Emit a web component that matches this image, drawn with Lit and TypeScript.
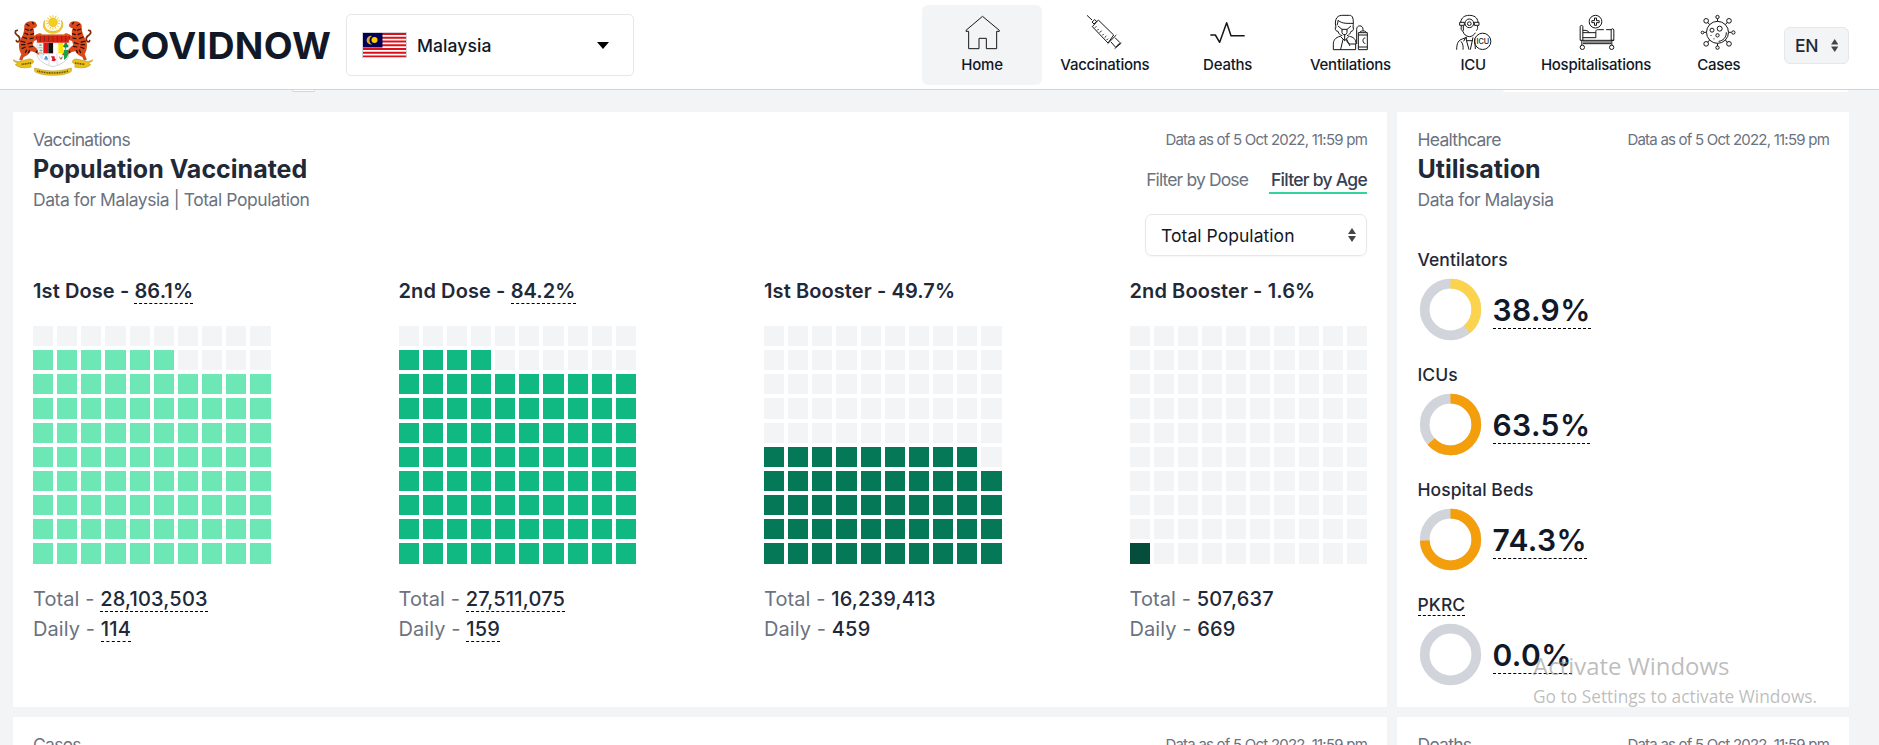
import { LitElement, html, svg, css } from "lit";
import { customElement, property } from "lit/decorators.js";
import { classMap } from "lit/directives/class-map.js";

const tiger = svg`
  <path d="M37 66c-8 0-8 9-2 13 8 5 12 10 8 18-2 5-8 4-9 0" fill="none" stroke="#7a2a0c" stroke-width="5" stroke-linecap="round"/>
  <path transform="translate(4 0)" d="M54 50c4-9 14-13 23-11 8 0 14 5 15 12 0 6-5 8-11 9 3 7 3 14 2 22 8-1 13-8 19-7 5 1 6 6 3 9-6 6-13 13-22 14l-4 12c7 4 13 11 17 18 8 1 14 5 17 11-7 4-15 2-20-3-6-4-14-7-20-7-4 9-12 14-21 17l-4 10c-6 1-10-1-9-4l6-15c-7-10-10-30-3-43 8-13 12-24 12-44z" fill="#d9481a"/>
  <path transform="translate(4 0)" d="M60 47l9 6M78 41l4 7M56 62l12 4M80 62l-9 4M54 74l12 5M83 76l-11 3M48 86l14 5M82 89l-12 2M42 98l15 4M44 109l13 0M77 103l-14 4M80 114l-13 2M46 121l12-5M57 134l4-10M93 82l-3 8M70 125l-4 9M92 127l-3 7" fill="none" stroke="#2a0f08" stroke-width="3.6"/>`;

const crest = html`<svg class="crest" viewBox="24 20 240 182" aria-label="Crest">
  <g stroke="#f5c400" stroke-width="2.5">
    ${Array.from({ length: 14 }, (_, i) => svg`<path d="M144 27V20" transform="rotate(${i * 25.7} 144 42)"/>`)}
  </g>
  <circle cx="144" cy="42" r="13" fill="#f6cf1d" stroke="#d9a900" stroke-width="1.5"/>
  <path d="M119 36C107 59 124 75 144 75s37-16 26-39c3 22-8 33-26 33s-29-11-25-33z" fill="#f8cf20" stroke="#c9a21a" stroke-width="1.5"/>
  <path d="M96 84h96v50c0 25-29 36-48 41-19-5-48-16-48-41z" fill="#fff" stroke="#b9bcc4" stroke-width="2"/>
  ${tiger}<g transform="matrix(-1 0 0 1 288 0)">${tiger}</g>
  <path d="M93 79h102l-4 24H97z" fill="#dc2415"/>
  <path d="M106 82v18M118 82v18M131 82v18M144 82v18M157 82v18M170 82v18M182 82v18" stroke="#8c2414" stroke-width="3"/>
  <path d="M94 80h100" stroke="#d9751c" stroke-width="3"/>
  <path d="M99 104h15v29H99z" fill="#edf3ee"/><path d="M103 108h7v5h-7zM104 124h8v5h-8z" fill="#7fb08c"/><path d="M101 116h11v4h-11z" fill="#a8c6e8"/>
  <path d="M115 104h15v31h-15z" fill="#e3131a"/><path d="M130 104h15v31h-15z" fill="#111"/>
  <path d="M145 104h15v31h-15z" fill="#fff"/><path d="M160 104h14v31h-14z" fill="#ffe600"/>
  <path d="M176 124h14v12c-2 9-6 14-13 19z" fill="#18a349"/><circle cx="179" cy="113" r="4.5" fill="#168c3e"/><circle cx="186" cy="113" r="4.5" fill="#168c3e"/><circle cx="182.500" cy="107" r="4.500" fill="#168c3e"/><path d="M182 114v9" stroke="#168c3e" stroke-width="3"/>
  <path d="M101 135h14v22c-8-5-13-13-14-22z" fill="#dcecf8"/>
  <path d="M132 135v34M156 135v34" stroke="#c9ccd4" stroke-width="2"/>
  <path d="M119 151l4-8 5 8zM118 154h11" stroke="#3c8ccc" fill="#3c8ccc" stroke-width="2"/>
  <path d="M138 144h11v6l5 4-6 5-9-2 3-5z" fill="#e1142b"/><path d="M162 142l5 7 6-6-2 10h-6z" fill="#8d7358"/>
  <path d="M25 154c7 5 15 7 24 4l23-6c9 0 16 4 13 11-8 3-9 8-6 13-17 4-36 4-48-7 4-2 7-4 5-7-5 0-10-2-11-8z" fill="#eac118" stroke="#a78612" stroke-width="1.500"/>
  <path d="M263 154c-7 5-15 7-24 4l-23-6c-9 0-16 4-13 11 8 3 9 8 6 13 17 4 36 4 48-7-4-2-7-4-5-7 5 0 10-2 11-8z" fill="#eac118" stroke="#a78612" stroke-width="1.500"/>
  <path d="M89 179c8 3 14 2 19 5 23 5 49 5 72 0 5-3 11-2 19-5v10c-5 6-13 5-20 9-22 4-49 4-70 0-7-4-15-3-20-9z" fill="#edc51c" stroke="#a78612" stroke-width="1.500"/>
  <path d="M50 168l28-4M210 164l28 4M97 188c32 8 64 8 94 0" fill="none" stroke="#5c4a0c" stroke-width="5" stroke-dasharray="3 2"/>
</svg>`;

const flag = html`<svg class="flag" viewBox="0 0 45 26">
  <path d="M0 0h45v26H0z" fill="#fff"/>
  ${[0, 1, 2, 3, 4, 5, 6].map((i) => svg`<path d="M0 ${1 + i * 3.75}h45v1.900H0z" fill="#d9121a"/>`)}
  <path d="M1 1h19.500v14.500H1z" fill="#000057"/>
  <path d="M10 4a4.300 4.300 0 1 0 0 8.300 4.600 4.600 0 0 1 0-8.300z" fill="#d7ab24"/>
  <circle cx="12.500" cy="8.100" r="3" fill="#ffcc00"/>
  <path d="M.5.5h44v25H.5z" fill="none" stroke="#d1d5db"/>
</svg>`;

const icons: Record<string, { box: string; art: unknown }> = {
  home: {
    box: "162 45 105 105",
    art: svg`<path d="M214.500 49L165 91v3h8v52h31v-31h22v31h31V94h8v-3z"/>`,
  },
  vaccine: {
    box: "532 45 105 105",
    art: svg`<path d="M532 46l15 14M547 66l8-7 6 5-8 8zM566 60l46 45-17 24-47-49zM594 131l26-26M616 113l15 15-13 14-14-16M615 146l20-17M556 83l4-4M563 91l4-4M570 98l6-6M578 106l4-4M585 113l5-5M591 120l4-4"/>`,
  },
  deaths: {
    box: "900 45 105 105",
    art: svg`<path stroke-width="4.500" d="M901 105h15l13 22 21-59 13 39h41"/>`,
  },
  vent: {
    box: "309 45 105 105",
    art: svg`<path d="M318 83c-5-20 0-36 17-37h23c10 0 14 9 11 37M321 76c2-5 3-10 3-15 14 11 28 9 45 9M316 82c-2 9 4 12 8 12 2 8 7 12 13 13M370 82c2 9-3 12-7 12-2 6-5 11-12 13M324 78l13 11M363 78l-13 11M336 88h15v10l-4 6h-7l-4-6zM331 109c-15 3-21 12-21 24v16h67v-17M331 109l13 13 13-13M344 104v18M339 118l-7 30M350 118l10 20M358 109c12 2 20 8 20 23h-17c-9 0-11-8-11-14M380 132V88c0-14 19-14 19 0v4M389 98c0-7 20-7 20 0M385 98h27v51h-27zM385 105h27M385 141h27M406 114c-9-2-10 17 0 16"/>`,
  },
  icu: {
    box: "677 45 105 105",
    art: svg`<path d="M691 66c3-14 12-20 26-20s24 6 26 20M688 67h14v9h-14zM732 67h14v9h-14zM693 78c-2 9 0 14 5 16 2 9 9 15 19 16 7 0 15-5 18-12M741 78c2 6 0 11-3 14M699 78v14M679 149c0-20 6-29 17-32l13-5M692 124c6 7 7 16 6 25M708 112v8l8 29M728 112l-8 37M709 122h19M706 112l-6 12M733 116l2 31"/><circle cx="717" cy="70" r="13"/><circle cx="717" cy="71" r="5.500"/><circle cx="757" cy="124" r="24.500"/><text class="badge" x="757.500" y="132" text-anchor="middle">ICU</text>`,
  },
  bed: {
    box: "175.500 45 105 105",
    art: svg`<circle cx="225" cy="65" r="19"/><path d="M222 54h6v8h8v6h-8v8h-6v-8h-8v-6h8zM179 121V80c0-5 8-5 8 0v41M187 91c9-1 18 2 20 8M187 98h39M187 113h39M226 113V94c0-4 3-5 7-5h17M257 89h15M272 121V90c0-5 8-5 8 0v31zM179 121h101M184 121v15M274 121v15M187 126h85M187 131h85"/><circle cx="185.500" cy="142" r="6.500"/><circle cx="273.500" cy="142" r="6.500"/>`,
  },
  virus: {
    box: "544 45 105 105",
    art: svg`<circle cx="593.500" cy="97" r="33"/><path d="M593.500 64v-8M593.500 130v8M560 97h-7M627 97h8M570 74l-6-7M617 74l6-7M570 120l-6 7M617 120l6 7M620 97c0 15-9 25-23 27"/><circle cx="593.500" cy="51" r="5"/><circle cx="593.500" cy="143" r="5"/><circle cx="548.500" cy="97.500" r="4"/><circle cx="641" cy="97.500" r="5"/><circle cx="559.500" cy="62.500" r="7"/><circle cx="628" cy="62.500" r="7"/><circle cx="559.500" cy="131.500" r="7"/><circle cx="628" cy="131.500" r="7"/><circle cx="600" cy="86" r="7.500"/><circle cx="577" cy="90.500" r="6"/><circle cx="593.500" cy="106" r="5"/><path d="M574 105v3M583 115v3"/>`,
  },
};

const nav = [
  ["Home", "home"], ["Vaccinations", "vaccine"], ["Deaths", "deaths"], ["Ventilations", "vent"],
  ["ICU", "icu"], ["Hospitalisations", "bed"], ["Cases", "virus"],
];

const sorter = html`<svg class="sorter" viewBox="0 0 8 14"><path d="M0 6L4 0l4 6zM0 8l4 6 4-6z" fill="#444"/></svg>`;

const shared = css`
  * { box-sizing: border-box; }
  .tip { border-bottom: 1px dashed #000; }
`;

@customElement("top-bar")
class TopBar extends LitElement {
  static styles = [shared, css`
    :host { display: flex; align-items: center; height: 90px; padding: 1px 30px 0 13px; background: #fff; border-bottom: 1px solid #d2d3dd; }
    .crest { width: 80px; height: 60.700px; flex: none; overflow: visible; }
    .brand { width: 234px; padding: 1px 0 0 19.500px; font-weight: 700; font-size: 37.500px; line-height: 40px; letter-spacing: 0.320px; color: #111827; }
    .country { display: flex; align-items: center; width: 288px; height: 62px; margin-left: 19px; padding: 0 24px 0 15px; border: 1px solid #e5e7eb; border-radius: 5px; font-weight: 500; font-size: 17.500px; line-height: 25px; letter-spacing: 0.080px; color: #111827; }
    .flag { width: 45px; height: 26px; margin-right: 10px; }
    .caret { margin-left: auto; width: 12px; height: 7px; }
    nav { display: flex; gap: 2.800px; margin-left: auto; }
    .item { display: flex; flex-direction: column; align-items: center; gap: 4.500px; width: 120px; height: 80px; padding: 10px 0; border-radius: 6px; font-weight: 500; font-size: 15px; line-height: 20px; letter-spacing: -0.250px; color: #111827; white-space: nowrap; }
    .on { background: #f3f4f6; }
    .glyph { width: 35px; height: 35px; fill: none; stroke: #161616; stroke-width: 3; stroke-linejoin: round; overflow: visible; }
    .badge { font: 500 22px Inter, sans-serif; fill: #161616; stroke: none; letter-spacing: 0; }
    .lang { display: flex; align-items: center; justify-content: space-between; width: 65px; height: 37px; margin-left: 5.200px; padding: 0 10px; border: 1px solid #e5e7eb; border-radius: 6px; background: #f3f4f6; font-weight: 500; font-size: 17.500px; letter-spacing: -0.200px; color: #1f2937; }
    .sorter { width: 7.500px; height: 13px; }
  `];
  render() {
    return html`${crest}
      <div class="brand">COVIDNOW</div>
      <div class="country">${flag}<span>Malaysia</span><svg class="caret" viewBox="0 0 12 7"><path d="M0 0h12L6 7z"/></svg></div>
      <nav>${nav.map(([label, icon], i) => html`<div class=${classMap({ item: true, on: i === 0 })}>
        <svg class="glyph" viewBox=${icons[icon].box}>${icons[icon].art}</svg><span>${label}</span></div>`)}</nav>
      <div class="lang">EN${sorter}</div>`;
  }
}

interface Dose { name: string; pct: string; full: number; color: string; total: string; daily: string; tip: boolean; }
const doses: Dose[] = [
  { name: "1st Dose", pct: "86.1%", full: 86, color: "#6ee7b7", total: "28,103,503", daily: "114", tip: true },
  { name: "2nd Dose", pct: "84.2%", full: 84, color: "#10b981", total: "27,511,075", daily: "159", tip: true },
  { name: "1st Booster", pct: "49.7%", full: 49, color: "#047857", total: "16,239,413", daily: "459", tip: false },
  { name: "2nd Booster", pct: "1.6%", full: 1, color: "#064e3b", total: "507,637", daily: "669", tip: false },
];

@customElement("dose-waffle")
class DoseWaffle extends LitElement {
  @property({ attribute: false }) dose!: Dose;
  static styles = [shared, css`
    :host { display: block; font-size: 20px; line-height: 30px; color: #1f2937; white-space: nowrap; }
    .title { font-weight: 600; margin-bottom: 20px; letter-spacing: 0.100px; }
    .grid { display: grid; grid-template-columns: repeat(10, 1fr); gap: 4px; margin-bottom: 20px; }
    .cell { aspect-ratio: 1; background: #f3f4f6; }
    .stat { color: #6b7280; letter-spacing: 0.080px; }
    .num { color: #1f2937; font-weight: 500; letter-spacing: 0.180px; }
  `];
  render() {
    const d = this.dose;
    const tip = (base: string) => classMap({ [base]: true, tip: d.tip });
    return html`<div class="title">${d.name} - <span class=${tip("pct")}>${d.pct}</span></div>
      <div class="grid">${Array.from({ length: 100 }, (_, i) => {
        const rank = (9 - Math.floor(i / 10)) * 10 + (i % 10);
        return rank < d.full ? html`<div class="cell" style="background:${d.color}"></div>` : html`<div class="cell"></div>`;
      })}</div>
      <div class="stat">Total - <span class=${tip("num")}>${d.total}</span></div>
      <div class="stat">Daily - <span class=${tip("num")}>${d.daily}</span></div>`;
  }
}

@customElement("usage-ring")
class UsageRing extends LitElement {
  @property() label = "";
  @property({ type: Number }) value = 0;
  @property() color = "";
  @property({ type: Boolean }) hint = false;
  static styles = [shared, css`
    :host { display: block; height: 115px; }
    .label { font-weight: 500; font-size: 17.500px; line-height: 25px; letter-spacing: 0.060px; color: #1f2937; }
    .row { display: flex; align-items: center; gap: 10px; height: 75px; }
    .ring { width: 65px; height: 65px; fill: none; stroke-width: 9.700; }
    .pct { padding-top: 1px; font-weight: 600; font-size: 30px; line-height: 37px; letter-spacing: 0.400px; color: #111827; }
  `];
  render() {
    return html`<div class="label"><span class=${classMap({ tip: this.hint })}>${this.label}</span></div>
      <div class="row"><svg class="ring" viewBox="0 0 65 65">
        <circle cx="32.500" cy="32.500" r="25.800" stroke="#d1d5db"/>
        ${this.value ? svg`<circle cx="32.500" cy="32.500" r="25.800" stroke=${this.color} pathLength="100" stroke-dasharray="${this.value} 100" transform="rotate(-90 32.500 32.500)"/>` : ""}
      </svg><div class="pct"><span class="tip">${this.value.toFixed(1)}%</span></div></div>`;
  }
}

@customElement("app-root")
class AppRoot extends LitElement {
  static styles = [shared, css`
    :host { display: block; position: relative; height: 745px; overflow: hidden; background: #f3f4f6; font-family: Inter, sans-serif; }
    .peek { display: flex; justify-content: space-between; height: 2px; padding: 0 31px 0 292px; }
    .pill { width: 23px; height: 2px; background: #fff; border: solid #d1d5db; border-width: 0 1px 1px; border-radius: 0 0 4px 4px; }
    .bar { width: 345px; height: 2px; background: #fff; border-radius: 0 0 4px 4px; }
    .board { display: grid; grid-template-columns: 1374px 452px; grid-template-rows: 595px 200px; gap: 10px; padding: 20px 30px 0 13px; }
    .card { background: #fff; padding: 15px 20px; }
    .narrow { padding-left: 20.500px; }
    .head { display: flex; justify-content: space-between; color: #6b7280; font-size: 17.500px; line-height: 25px; white-space: nowrap; }
    .topic { letter-spacing: -0.710px; }
    .title { font-weight: 700; font-size: 25px; line-height: 35px; color: #1f2937; }
    .sub { letter-spacing: -0.430px; }
    .side { display: flex; flex-direction: column; align-items: flex-end; }
    .date { font-size: 15px; letter-spacing: -0.775px; }
    .tabs { display: flex; gap: 21.500px; margin: 15px 0 20px; letter-spacing: -0.870px; }
    .active { padding-left: 1.500px; font-weight: 500; color: #374151; letter-spacing: -0.730px; border-bottom: 2px solid #34d399; }
    .select { display: flex; justify-content: space-between; align-items: center; width: 222px; height: 42px; padding: 0 10px 0 15px; border: 1px solid #e5e7eb; border-radius: 7px; color: #111827; letter-spacing: 0.050px; box-shadow: 0 1px 2px rgba(0, 0, 0, .04); }
    .sorter { width: 8px; height: 14px; }
    .doses { display: grid; grid-template-columns: repeat(4, 1fr); gap: 128px; margin-top: 20px; }
    .rings { margin-top: 35px; }
    .watermark { position: absolute; left: 1533px; top: 651px; font-family: "Open Sans", "Noto Sans", sans-serif; color: rgba(145, 145, 145, .6); white-space: nowrap; }
    .wm1 { font-size: 23.950px; line-height: 30px; }
    .wm2 { font-size: 17.350px; line-height: 30px; }
  `];
  head(topic: string, title: string, sub: string, controls: unknown = "") {
    return html`<div class="head"><div><div class="topic">${topic}</div><div class="title">${title}</div><div class="sub">${sub}</div></div>
      <div class="side"><div class="date">Data as of 5 Oct 2022, 11:59 pm</div>${controls}</div></div>`;
  }
  render() {
    return html`<top-bar></top-bar>
      <div class="peek"><div class="pill"></div><div class="bar"></div></div>
      <div class="board">
        <section class="card">
          ${this.head("Vaccinations", "Population Vaccinated", "Data for Malaysia | Total Population", html`
            <div class="tabs"><span>Filter by Dose</span><span class="active">Filter by Age</span></div>
            <div class="select">Total Population${sorter}</div>`)}
          <div class="doses">${doses.map((d) => html`<dose-waffle .dose=${d}></dose-waffle>`)}</div>
        </section>
        <section class="card narrow">
          ${this.head("Healthcare", "Utilisation", "Data for Malaysia")}
          <div class="rings">
            <usage-ring label="Ventilators" value="38.9" color="#fcd34d"></usage-ring>
            <usage-ring label="ICUs" value="63.5" color="#f59e0b"></usage-ring>
            <usage-ring label="Hospital Beds" value="74.3" color="#f59e0b"></usage-ring>
            <usage-ring label="PKRC" value="0" hint></usage-ring>
          </div>
        </section>
        <section class="card">${this.head("Cases", "", "")}</section>
        <section class="card narrow">${this.head("Deaths", "", "")}</section>
      </div>
      <div class="watermark"><div class="wm1">Activate Windows</div><div class="wm2">Go to Settings to activate Windows.</div></div>`;
  }
}
